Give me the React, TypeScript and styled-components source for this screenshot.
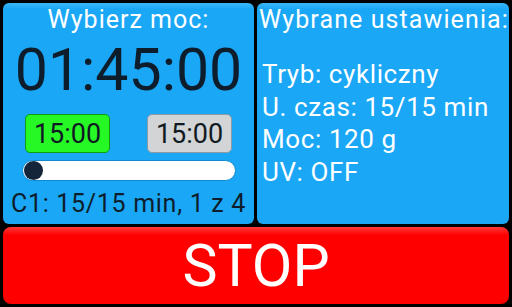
import React from "react";
import styled, { createGlobalStyle } from "styled-components";

const GlobalStyle = createGlobalStyle`
  html, body {
    margin: 0;
    padding: 0;
    background: #000;
  }
  body {
    font-family: Roboto, "Liberation Sans", sans-serif;
  }
`;

const Screen = styled.div`
  width: 512px;
  height: 307px;
  box-sizing: border-box;
  padding: 3px;
  display: grid;
  grid-template-rows: 221px 77px;
  row-gap: 3px;
  background: #000;
`;

const TopRow = styled.div`
  display: grid;
  grid-template-columns: 251px 252px;
  column-gap: 3px;
`;

const Panel = styled.div<{ $align?: "center" | "left" }>`
  background: linear-gradient(to bottom, #3bb6f8 0px, #1aa7f5 6px, #1aa7f5 100%);
  border-radius: 6px;
  display: flex;
  flex-direction: column;
  align-items: ${({ $align }) => ($align === "left" ? "flex-start" : "center")};
  overflow: hidden;
  color: #fff;
`;

const Title = styled.div<{ $spacing: number; $indent?: number }>`
  font-size: 25px;
  line-height: 1;
  margin-top: 4px;
  padding-left: ${({ $indent }) => $indent ?? 0}px;
  letter-spacing: ${({ $spacing }) => $spacing}px;
  white-space: nowrap;
`;

const Clock = styled.div`
  font-size: 59px;
  line-height: 1;
  color: #0e1d2c;
  margin-top: 8px;
`;

const ButtonRow = styled.div`
  display: flex;
  justify-content: space-between;
  width: 207px;
  margin-top: 15px;
`;

const TimeButton = styled.div<{ $active?: boolean }>`
  width: 85px;
  height: 39px;
  box-sizing: border-box;
  border-radius: 5px;
  border: 1px solid ${({ $active }) => ($active ? "#139a13" : "#8f9aa3")};
  background: ${({ $active }) => ($active ? "#26f826" : "#d2d4d6")};
  color: #111a22;
  font-size: 27px;
  display: flex;
  align-items: center;
  justify-content: center;
`;

const Slider = styled.div`
  position: relative;
  width: 214px;
  height: 21px;
  margin-top: 7px;
  background: #fff;
  border-radius: 10.5px;
  border: 1px solid #0d8ad0;
  box-sizing: border-box;
`;

const Knob = styled.div`
  position: absolute;
  left: 1px;
  top: 0px;
  width: 19px;
  height: 19px;
  border-radius: 50%;
  background: #14253a;
`;

const Status = styled.div`
  font-size: 25px;
  line-height: 1;
  color: #0e1d2c;
  margin-top: 10px;
  letter-spacing: 0.7px;
  white-space: nowrap;
`;

const InfoList = styled.div`
  display: flex;
  flex-direction: column;
  margin-top: 26px;
  padding-left: 5px;
`;

const InfoLine = styled.div`
  font-size: 26px;
  line-height: 32.7px;
  letter-spacing: 0.6px;
  white-space: nowrap;
`;

const StopButton = styled.div`
  background: linear-gradient(to bottom, #ff3a3a 0px, #ff0000 8px, #ff0000 100%);
  border-radius: 8px;
  display: flex;
  align-items: center;
  justify-content: center;
  color: #fff;
  font-size: 59px;
  line-height: 1;
`;

export default function App() {
  return (
    <>
      <GlobalStyle />
      <Screen>
        <TopRow>
          <Panel>
            <Title $spacing={1}>Wybierz moc:</Title>
            <Clock>01:45:00</Clock>
            <ButtonRow>
              <TimeButton $active>15:00</TimeButton>
              <TimeButton>15:00</TimeButton>
            </ButtonRow>
            <Slider>
              <Knob />
            </Slider>
            <Status>C1: 15/15 min, 1 z 4</Status>
          </Panel>
          <Panel $align="left">
            <Title $spacing={1.1} $indent={2}>Wybrane ustawienia:</Title>
            <InfoList>
              <InfoLine>Tryb: cykliczny</InfoLine>
              <InfoLine>U. czas: 15/15 min</InfoLine>
              <InfoLine>Moc: 120 g</InfoLine>
              <InfoLine>UV: OFF</InfoLine>
            </InfoList>
          </Panel>
        </TopRow>
        <StopButton>STOP</StopButton>
      </Screen>
    </>
  );
}
